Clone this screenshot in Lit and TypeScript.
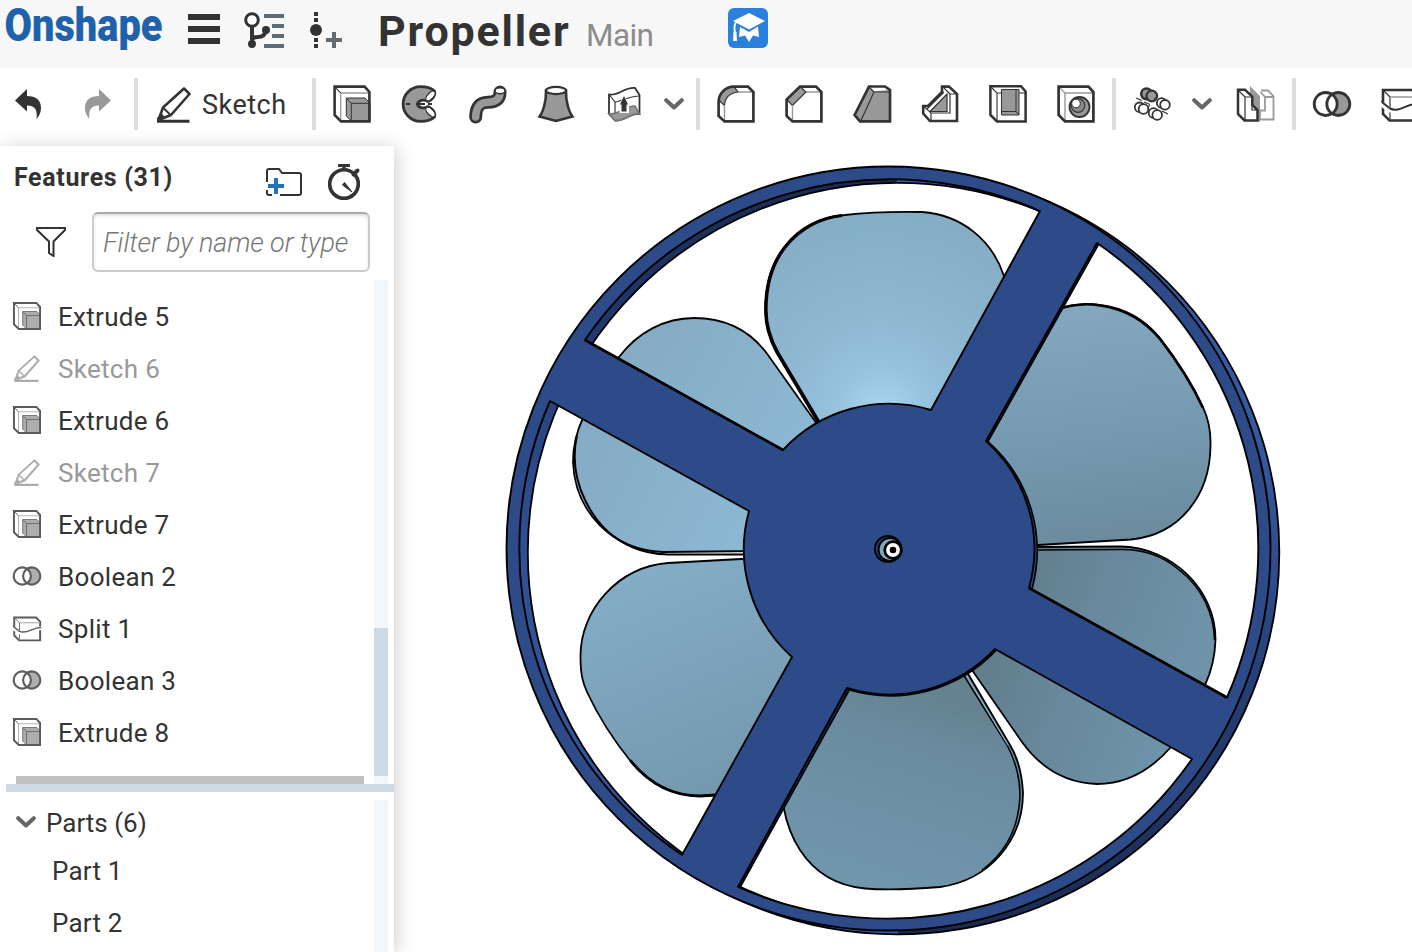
import { LitElement, html, css, svg, TemplateResult } from "lit";
import { customElement, property } from "lit/decorators.js";

const D = "#333";
const G = "#999";

const icons: Record<string, TemplateResult> = {
  pencil: svg`<g fill="none" stroke=${D} stroke-width="2.6" stroke-linejoin="round">
    <path d="M4.5 36 L9 23.5 L30 4.5 L35.5 10 L17 31 Z"/><path d="M9.5 24 L16.5 31" stroke-width="2"/>
    <path d="M4 36 L9 31" stroke-width="4"/><path d="M3 37.2 H35.5" stroke-width="3"/></g>`,
  extrude: svg`<g stroke-linejoin="miter"><path d="M2.6 2.6 H32.5 L37.4 8 V37.4 H9 L2.6 31 Z" fill="#fff"/>
    <path d="M3 3 L8.7 9 V37 M8.7 9 H37" fill="none" stroke=${G} stroke-width="1.3"/>
    <path d="M3 3 L8.7 9" stroke=${D} stroke-width="1"/>
    <path d="M14.3 14 H33 L38 19.3 V37 H19.3 L14.3 32 Z" fill=${G} stroke=${D} stroke-width="1"/>
    <path d="M14.3 14 L19.3 19.3 H38 M19.3 19.3 V37" fill="none" stroke=${D} stroke-width="1"/>
    <path d="M2.6 2.6 H32.5 L37.4 8 V37.4 H9 L2.6 31 Z" fill="none" stroke=${D} stroke-width="2.6"/></g>`,
  revolve: svg`<path d="M34.5 7 C31 3.5 26 2.6 20.500 2.6 A17.4 17.4 0 0 0 20.5 37.4 C26 37.4 31 36.5 34.5 33 C36 29 33 24.5 28 22.5 C24 25 18 24 17.5 20 C18 16 24 15 28 17.5 C33 15.5 36 11 34.5 7 Z" fill=${G} stroke=${D} stroke-width="2.8" stroke-linejoin="round"/>
    <ellipse cx="30.5" cy="12" rx="3" ry="6" transform="rotate(43 30.5 12)" fill="#fff" stroke=${D} stroke-width="1.3"/>
    <ellipse cx="30.5" cy="28" rx="3" ry="6" transform="rotate(-43 30.5 28)" fill="#fff" stroke=${D} stroke-width="1.3"/>
    <path d="M6 20 H10 M16 20 H25 M28 20 H32" stroke=${D} stroke-width="2"/>`,
  sweep: svg`<g fill="none" stroke-linecap="round"><path d="M7.7 33 C8 21 13 18.5 20 18.3 C28 18 32 15 32 8" stroke=${D} stroke-width="13"/>
    <path d="M7.7 33 C8 21 13 18.5 20 18.3 C28 18 32 15 32 8" stroke=${G} stroke-width="7.600"/></g>
    <ellipse cx="32" cy="6.8" rx="5" ry="3" fill="#fff" stroke=${D} stroke-width="1.5"/>`,
  loft: svg`<path d="M10 6.5 C10.5 17 7 28 3.5 32.5 L20 37 L36.5 32.5 C33 28 29.5 17 30 6.5 Z" fill=${G} stroke=${D} stroke-width="2.6"/>
    <ellipse cx="20" cy="6.5" rx="10" ry="3.6" fill="#fff" stroke=${D} stroke-width="2.2"/>`,
  thicken: svg`<g fill="#fff" stroke=${D} stroke-width="1.8" stroke-linejoin="round"><path d="M5 10.5 C15 12 20 3 31 4 L35.5 11 V30 C27 28 22 37 11 36.5 L5 30 Z"/>
    <path d="M5 10.5 L11 18 C19 17 26 12 35.5 12" fill="none" stroke-width="1.2"/><path d="M11 18 V36" stroke-width="1.2"/></g>
    <path d="M5 30 C14 31 21 22 31 22 L35.5 30 C27 28 22 37 11 36.5 Z" fill=${G} stroke="#777" stroke-width="1.6"/>
    <path d="M15.500 21 L20 10 L25 21 V29 H15.5 Z" fill="#fff"/><path d="M16 20.5 L20 12 L24 20.5 H22.5 V27.5 H17.5 V20.5 Z" fill=${D}/>`,
  fillet: svg`<path d="M2.6 32 V18 A15.5 15.5 0 0 1 18 2.6 H32 L37.4 8 V37.4 H8.5 Z" fill="#fff"/>
    <path d="M2.6 16 C4 8 9 3 18 2.6 L22 8 C14 9 9 13 8.5 21.5 Z" fill=${G} stroke=${D} stroke-width="1.2"/>
    <path d="M8.5 21 V37 M22 8 H37" stroke=${G} stroke-width="1.4"/>
    <path d="M2.6 32 V18 A15.5 15.5 0 0 1 18 2.6 H32 L37.4 8 V37.4 H8.5 Z" fill="none" stroke=${D} stroke-width="2.7"/>`,
  chamfer: svg`<path d="M16 2.6 H32 L37.4 8 V37.4 H8.5 L2.6 32 V15.5 Z" fill="#fff"/>
    <path d="M16 2.6 L22 8 L8.5 21.5 L2.6 15.5 Z" fill=${G} stroke=${D} stroke-width="1.2"/>
    <path d="M8.5 21 V37 M22 8 H37" stroke=${G} stroke-width="1.4"/>
    <path d="M16 2.6 H32 L37.4 8 V37.4 H8.5 L2.6 32 V15.5 Z" fill="none" stroke=${D} stroke-width="2.7"/>`,
  draft: svg`<path d="M17 2.6 H33 L38 6 V37.4 H8 L2.6 31 Z" fill=${G} stroke=${D} stroke-width="2.7"/>
    <path d="M18 3.8 H32.5 L35.5 6 L22 7.5 Z" fill="#fff"/><path d="M17.5 3.5 L22 8 L9 36.5 M22 8 H37" fill="none" stroke=${D} stroke-width="1.2"/>`,
  rib: svg`<path d="M22 2.6 H29 L37 10 V37 H10 L3.2 29.5 V22 H8 L22 8 Z" fill="#fff" stroke=${D} stroke-width="2.6"/>
    <path d="M27 10 V27.5 H10 Z" fill=${G} stroke=${D} stroke-width="1.2"/>
    <path d="M24 4 L30 10 V29 H11 L4 22.5 M11 29 V36 M30 10 H36 M24 8 L7 25" fill="none" stroke=${D} stroke-width="1.2"/>`,
  shell: svg`<path d="M2.4 2.2 H33 L37.6 7.5 V37.5 H9 L2.4 31 Z" fill="#fff"/>
    <path d="M13.5 5.5 H31 V31 H13.5 Z" fill=${G} stroke=${D} stroke-width="1"/>
    <path d="M28 6 V27.5 L31 31 M13.5 27.5 H28" fill="none" stroke=${D} stroke-width="1"/>
    <path d="M3 3 L9 9 V37 M9 9 H13.5 M31 9 H37" fill="none" stroke=${D} stroke-width="1.1"/>
    <path d="M2.4 2.2 H33 L37.6 7.5 V37.5 H9 L2.4 31 Z" fill="none" stroke=${D} stroke-width="2.5"/>`,
  hole: svg`<path d="M2.6 2.6 H32.5 L37.4 8 V37.4 H9 L2.6 31 Z" fill="#fff"/>
    <path d="M3 3 L9 9 V37 M9 9 H37" fill="none" stroke=${G} stroke-width="1.4"/>
    <circle cx="23.5" cy="23" r="10" fill=${G} stroke=${D} stroke-width="1.8"/>
    <circle cx="22" cy="21.5" r="6.8" fill="#888" stroke=${D} stroke-width="1.2"/>
    <circle cx="20" cy="19.5" r="4.3" fill="#fff" stroke=${D} stroke-width="1"/>
    <path d="M2.6 2.6 H32.5 L37.4 8 V37.4 H9 L2.6 31 Z" fill="none" stroke=${D} stroke-width="2.7"/>`,
  pattern: svg`<g stroke=${D} stroke-width="1.8"><circle cx="14.5" cy="9.8" r="5.3" fill=${G} stroke-width="2.6"/><circle cx="19.8" cy="12" r="5.3" fill=${G} stroke-width="2.2"/>
    <g fill="#fff"><circle cx="7.6" cy="23.3" r="4.8"/><circle cx="11.5" cy="25" r="4.8"/>
    <circle cx="29.7" cy="19" r="4.8"/><circle cx="33" cy="20.8" r="4.8"/>
    <circle cx="21.5" cy="29" r="4.8"/><circle cx="25.2" cy="31" r="4.8"/></g>
    <path d="M4 14 L10 16.5 M12 18 L18 20.5 M22 15 L26 13 M30 27 L36 30 M16 22.5 L18 21.500" stroke-width="1.2"/></g>`,
  mirror: svg`<path d="M14 2 L24 12 V38 L21 36 V25 L16 20 V12 L14 10 Z" fill=${G}/>
    <path d="M2 5.8 H9 L16.3 12.7 V21 L21.5 26 V36.5 H8.5 L2 30 Z" fill="#fff" stroke=${D} stroke-width="2.5"/>
    <path d="M3 7 L9 13 V36 M9 13 H16 M16 21 V26 H21" fill="none" stroke=${D} stroke-width="1.2"/>
    <path d="M25 6.5 H32 L37.5 12 V35.5 H24 V26.5 H29 V13 L24.5 8 M29 13 H37" fill="none" stroke=${G} stroke-width="1.8"/>`,
  boolean: svg`<circle cx="26.3" cy="20" r="11.5" fill=${G}/><circle cx="13.7" cy="20" r="11.5" fill="#fff"/>
    <g fill="none" stroke=${D} stroke-width="2.8"><circle cx="26.3" cy="20" r="11.5"/><circle cx="13.7" cy="20" r="11.5"/></g>`,
  split: svg`<path d="M3 6 H32 L37.5 11.5 V36.5 H9.5 L3 30 Z" fill="#fff" stroke=${D} stroke-width="2.6"/>
    <path d="M4 7 L10 13 V35" fill="none" stroke=${D} stroke-width="1.2"/><path d="M10 13 H37" stroke=${G} stroke-width="1.5"/>
    <path d="M0 19 L10 26 C20 30 27 20 40 20" fill="none" stroke="#fff" stroke-width="5"/>
    <path d="M1.5 17 L3 19 L10 24.5 C20 29 27 19 39 19.5" fill="none" stroke=${D} stroke-width="2"/>`,
};

@customElement("tool-icon")
class ToolIcon extends LitElement {
  @property() name = "";
  static styles = css`
    :host { display: block; width: 40px; height: 40px; flex: none; }
    svg { display: block; width: 100%; height: 100%; }
  `;
  render() {
    return html`<svg viewBox="0 0 40 40">${icons[this.name]}</svg>`;
  }
}

@customElement("chevron-down")
class ChevronDown extends LitElement {
  static styles = css`:host { display: block; flex: none; width: 20px; height: 12px; } svg { display: block; }`;
  render() {
    return html`<svg width="20" height="12" viewBox="0 0 20 12"><path d="M2.2 2.2 L10 9.5 L17.8 2.2" fill="none" stroke="#666" stroke-width="4" stroke-linecap="round" stroke-linejoin="round"/></svg>`;
  }
}

const FRONT_HOLES =
  "M585 340 A370 370 0 0 1 1040 211 L931 410 A144.500 144.500 0 0 0 783 450 Z" +
  "M1097 243 A370 370 0 0 1 1227 697.500 L1029 588 A144.500 144.500 0 0 0 986 441 Z" +
  "M1192 759 A370 370 0 0 1 738 887 L847 688 A144.500 144.500 0 0 0 995 649 Z" +
  "M682 855 A370 370 0 0 1 550 401 L749 511 A144.500 144.500 0 0 0 792 657 Z";
const FRONT_RIM =
  "M506.500 548.500 A382 382 0 0 1 888.500 166.500 A382 382 0 0 1 1270.500 548.500 A382 382 0 0 1 888.500 930.500 A382 382 0 0 1 506.500 548.500 Z";

@customElement("model-view")
class ModelView extends LitElement {
  static styles = css`:host { display: block; } svg { display: block; }`;
  render() {
    return html`<svg width="1018" height="812" viewBox="394 140 1018 812">
      <defs>
        <linearGradient id="wallL" gradientUnits="userSpaceOnUse" x1="0" y1="180" x2="0" y2="860">
          <stop offset="0" stop-color="#192b50"/><stop offset=".2" stop-color="#20376a"/><stop offset=".34" stop-color="#294581"/><stop offset=".55" stop-color="#2f5092"/><stop offset="1" stop-color="#345ba4"/>
        </linearGradient>
        <linearGradient id="wallR" gradientUnits="userSpaceOnUse" x1="0" y1="200" x2="0" y2="930">
          <stop offset="0" stop-color="#355da6"/><stop offset=".35" stop-color="#3359a0"/><stop offset=".52" stop-color="#2d4c8a"/><stop offset=".7" stop-color="#243c70"/><stop offset="1" stop-color="#1a2b52"/>
        </linearGradient>
        <radialGradient id="b1" gradientUnits="userSpaceOnUse" cx="882" cy="412" r="200">
          <stop offset="0" stop-color="#a8d6f1"/><stop offset=".22" stop-color="#97c3de"/><stop offset=".5" stop-color="#8eb7d1"/><stop offset="1" stop-color="#86adc6"/>
        </radialGradient>
        <linearGradient id="b2" gradientUnits="userSpaceOnUse" x1="620" y1="370" x2="790" y2="470">
          <stop offset="0" stop-color="#86abc4"/><stop offset="1" stop-color="#8cb8d3"/>
        </linearGradient>
        <linearGradient id="b3" gradientUnits="userSpaceOnUse" x1="650" y1="560" x2="740" y2="780">
          <stop offset="0" stop-color="#84adc7"/><stop offset="1" stop-color="#7499af"/>
        </linearGradient>
        <linearGradient id="b4" gradientUnits="userSpaceOnUse" x1="930" y1="690" x2="870" y2="890">
          <stop offset="0" stop-color="#64828f"/><stop offset=".25" stop-color="#6a8b9f"/><stop offset="1" stop-color="#7197ad"/>
        </linearGradient>
        <linearGradient id="b5" gradientUnits="userSpaceOnUse" x1="1010" y1="620" x2="1200" y2="690">
          <stop offset="0" stop-color="#617f8d"/><stop offset=".35" stop-color="#68889b"/><stop offset="1" stop-color="#6f94aa"/>
        </linearGradient>
        <linearGradient id="b6" gradientUnits="userSpaceOnUse" x1="1080" y1="310" x2="1110" y2="545">
          <stop offset="0" stop-color="#82a7bf"/><stop offset=".55" stop-color="#7599b0"/><stop offset="1" stop-color="#6a8b9c"/>
        </linearGradient>
      </defs>

      <g stroke="#000" stroke-width="1.8" stroke-linejoin="round">
        <path fill="url(#b2)" d="M817 424 L768 355 C750 330 725 318 694 318 C665 318 638 332 619 357 L583 418 C575 435 573 448 573 462 C575 512 612 550 663 552 L760 551 L830 450 Z"/>
        <path fill="none" d="M577 435 C567 480 592 530 632 547 Q648 554 668 554.5 L746 554.5" stroke-width="2"/>
        <path fill="url(#b1)" d="M818 423 L776 352 C768 337 765 325 765 310 C765 285 772 262 785 246 C800 227 820 217 845 215 C870 212 890 211.5 922 212 C962 215 992 240 1004 276 L1000 340 L930 430 L840 440 Z"/>
        <path fill="none" stroke-width="3.2" d="M819 422 L778 353 C769 337 766 325 766 310 C766 285 773 262 786 246 C801 228 820 218 842 215.500"/>
        <path fill="url(#b3)" d="M750 558.500 L668 563 C618 567 580 610 580.5 657 C580.5 675 583 683 587 692 C599 718 615 742 632 763 C650 785 675 796 700 796 L716 795 L810 700 L800 600 Z"/>
        <path fill="none" stroke-width="2.8" d="M630 760 C650 785 675 796 700 796 L716 795"/>
        <path fill="url(#b6)" d="M1062 308 C1075 304 1090 303.5 1100 305 C1125 308 1145 320 1160 338 C1177 360 1192 383 1203 407 C1209 420 1211 432 1210.5 446 C1210 495 1180 535 1131 539.5 L1030 545.5 L960 450 Z"/>
        <path fill="none" stroke-width="2.6" d="M1063 307.5 C1075 304 1090 303.5 1100 305.5 C1125 309 1145 321 1160 339 C1177 361 1192 384 1203 408"/>
        <path fill="url(#b5)" d="M1030 547 L1120 546.5 C1172 547 1216 590 1215.5 640 C1215 655 1212 670 1205 685 L1171 747 C1150 771 1125 784 1097 784 C1065 783 1040 767 1022 742 L972 670 L990 560 Z"/>
        <path fill="none" d="M1030 550 L1120 549.5 C1145 549 1165 558 1178 569 C1203 588 1214 615 1214.500 640" stroke-width="1.5"/>
        <path fill="url(#b4)" d="M783.5 807 C787 825 792 838 800 850 C815 873 838 886 865 888.500 C890 890.5 915 889 940 887 C990 880 1023 840 1023 793 C1022 773 1018 758 1010 745 L967 672 L840 680 Z"/>
        <path fill="none" stroke-width="1.5" d="M963 674 L1007 745 C1017 764 1020 780 1020 795 C1019 830 1005 853 982 870"/>
        <path fill="none" stroke-width="1.2" stroke="#8bb6cf" d="M966 675 L1008 745"/>
      </g>

      <path d="M897.3 928 A375.7 375.7 0 0 1 897.3 176.6" fill="none" stroke="url(#wallL)" stroke-width="12.5"/>
      <path d="M897.3 176.6 A375.7 375.7 0 0 1 897.3 928" fill="none" stroke="url(#wallR)" stroke-width="12.5"/>
      <g fill="none" stroke="#000" stroke-width="1.8"><circle cx="897.3" cy="552.3" r="382"/><circle cx="897.3" cy="552.3" r="369.5"/></g>
      <g fill="#1d3261" stroke="#000" stroke-width="1.6" stroke-linejoin="round">
        <path d="M1097 243 L1098.5 244.5 L988 441.500 L986 441 Z"/>
        <path d="M847 688 L849.5 689.5 L740 887.5 L738 887 Z"/>
        <path fill="#2a477f" d="M986 441 L988 441.5 A145.5 145.5 0 0 1 1032 589 L1029 588 Z"/>
        <path d="M995 649 L996 650.5 A145.5 145.5 0 0 1 848 689.5 L860 670 Z"/>
      </g>
      <path d="${FRONT_RIM}${FRONT_HOLES}" fill="#2d4b88" fill-rule="evenodd" stroke="#000" stroke-width="1.900" stroke-linejoin="round"/>
      <path d="M585 340 L783 450 M1029 588 L1227 697.5" stroke="#000" stroke-width="2.6"/>

      <g stroke="#000">
        <circle cx="888" cy="549" r="13" fill="#2a477f" stroke-width="2"/>
        <circle cx="890" cy="549.5" r="11.5" fill="#7fa9bd" stroke-width="2"/>
        <circle cx="893" cy="550" r="8.3" fill="#fff" stroke-width="2.8"/>
        <circle cx="893" cy="550" r="3.3" stroke="none"/>
      </g>
    </svg>`;
  }
}

const FEATURES = [
  { icon: "extrude", label: "Extrude 5" },
  { icon: "pencil", label: "Sketch 6", muted: true },
  { icon: "extrude", label: "Extrude 6" },
  { icon: "pencil", label: "Sketch 7", muted: true },
  { icon: "extrude", label: "Extrude 7" },
  { icon: "boolean", label: "Boolean 2" },
  { icon: "split", label: "Split 1" },
  { icon: "boolean", label: "Boolean 3" },
  { icon: "extrude", label: "Extrude 8" },
];

@customElement("feature-panel")
class FeaturePanel extends LitElement {
  static styles = css`
    :host { display: flex; flex-direction: column; width: 394px; height: 806px; background: #fff; flex: none;
      box-shadow: 2px 2px 18px rgba(0, 0, 0, 0.2); color: #333; font-size: 26px; letter-spacing: 0.3px; }
    .head { display: flex; height: 62px; padding-left: 14px; flex: none; }
    .title { font-weight: 700; font-size: 25px; line-height: 64px; letter-spacing: 0.65px; width: 252px; }
    .folder { margin-top: 22px; }
    .timer { margin: 18px 0 0 26px; }
    .filter { display: flex; height: 60px; margin-top: 4px; padding-left: 36px; flex: none; align-items: center; }
    .input { box-sizing: border-box; width: 278px; height: 60px; margin-left: 26px; border: 2px solid #ccc; border-top-color: #aaa; border-radius: 6px;
      box-shadow: inset 0 2px 3px rgba(0, 0, 0, 0.12); padding-left: 9px; line-height: 58px; color: #777;
      font-style: italic; font-weight: 300; font-size: 27px; letter-spacing: -0.12px; white-space: nowrap; }
    .features { display: flex; height: 504px; margin-top: 8px; flex: none; }
    .list { width: 374px; padding-top: 11px; box-sizing: border-box; display: flex; flex-direction: column; }
    .row { display: flex; align-items: center; height: 52px; padding-left: 12px; gap: 16px; flex: none; line-height: 52px; }
    .row tool-icon { width: 30px; height: 30px; opacity: 0.8; margin-top: -3px; }
    .row.muted { color: #999; }
    .row.muted tool-icon { opacity: 0.4; }
    .rollback { height: 8px; margin: auto 10px 0 16px; background: #c1c1c1; }
    .track { width: 14px; background: #f2f7fb; display: flex; flex-direction: column; }
    .thumb { height: 148px; margin: auto 0 8px; background: #cddae4; }
    .splitter { height: 8px; margin-left: 6px; background: #cddae4; flex: none; }
    .parts { display: flex; flex: 1; min-height: 0; }
    .parts .track { margin-top: 8px; }
    .partlist { width: 374px; line-height: 52px; padding-top: 5px; box-sizing: border-box; letter-spacing: 0.2px; }
    .group { display: flex; align-items: center; height: 48px; padding-left: 16px; gap: 10px; letter-spacing: 0; }
    .group chevron-down { margin-top: 2px; }
    .group span { padding-top: 4px; }
    .part { height: 52px; padding-left: 52px; }
  `;
  render() {
    return html`
      <div class="head">
        <span class="title">Features (31)</span>
        <svg class="folder" width="36" height="28" viewBox="0 0 36 28"><path d="M1 14 V3 Q1 1 3 1 H13 L16 5 H33 Q35 5 35 7 V25 Q35 27 33 27 H14 M1 22 V25 Q1 27 3 27 H6" fill="none" stroke="#333" stroke-width="2"/><path d="M8 10 H12 V16 H18 V20 H12 V26 H8 V20 H2 V16 H8 Z" fill="#2272b9"/></svg>
        <svg class="timer" width="34" height="38" viewBox="0 0 34 38"><circle cx="16" cy="20" r="14.3" fill="none" stroke="#333" stroke-width="3.6"/><path d="M10 1.5 H22 M16 1 V6" stroke="#333" stroke-width="3.2"/><path d="M25.5 10.5 L29.5 6.5" stroke="#333" stroke-width="4" stroke-linecap="round"/><path d="M14.5 21 L16.5 18.5 L24 28 Z" fill="#333" stroke="#333" stroke-linejoin="round"/></svg>
      </div>
      <div class="filter">
        <svg width="30" height="30" viewBox="0 0 30 30"><path d="M1 1 H29 V3 L17.500 14.5 V29 L13 26 V14.5 L1 3 Z" fill="none" stroke="#333" stroke-width="2"/></svg>
        <div class="input">Filter by name or type</div>
      </div>
      <div class="features">
        <div class="list">
          ${FEATURES.map((f) => html`<div class="row ${f.muted ? "muted" : ""}"><tool-icon name=${f.icon}></tool-icon><span>${f.label}</span></div>`)}
          <div class="rollback"></div>
        </div>
        <div class="track"><div class="thumb"></div></div>
      </div>
      <div class="splitter"></div>
      <div class="parts">
        <div class="partlist">
          <div class="group"><chevron-down></chevron-down><span>Parts (6)</span></div>
          <div class="part">Part 1</div>
          <div class="part">Part 2</div>
        </div>
        <div class="track"></div>
      </div>`;
  }
}

@customElement("app-root")
class AppRoot extends LitElement {
  static styles = css`
    :host { display: block; width: 1412px; height: 952px; overflow: hidden; background: #fff; color: #333; font-family: Roboto, "Noto Sans", sans-serif; }
    header { display: flex; height: 68px; background: #f7f7f7; }
    header svg { display: block; flex: none; }
    .menu { margin: 14px 0 0 8px; }
    .tree { margin: 12px 0 0 24px; }
    .insert { margin: 12px 0 0 26px; }
    .name { width: 208px; margin-left: 36px; font-weight: 700; font-size: 43px; line-height: 63px; letter-spacing: 1.8px; }
    .tab { width: 142px; font-size: 31.5px; line-height: 71px; font-weight: 400; letter-spacing: -0.6px; color: #8c8c8c; }
    .learn { margin-top: 8px; }
    .toolbar { display: flex; align-items: center; height: 72px; overflow: hidden; }
    .undo { margin-left: 14px; flex: none; }
    .redo { margin: 0 20px 0 42px; flex: none; }
    .sep { width: 4px; height: 52px; background: #ddd; margin: 0 2px; flex: none; }
    .tool { width: 68px; display: flex; justify-content: center; flex: none; }
    .more { width: 32px; margin-right: 4px; display: flex; justify-content: center; flex: none; }
    .sketch { display: flex; align-items: center; width: 156px; padding-left: 14px; gap: 8px; font-size: 27px; letter-spacing: 0.5px; flex: none; }
    .sketch span { padding-top: 2px; }
    .body { display: flex; }
    feature-panel { margin-top: 6px; z-index: 1; }
  `;
  private tool(n: string) {
    return html`<div class="tool"><tool-icon name=${n}></tool-icon></div>`;
  }
  render() {
    const sep = html`<div class="sep"></div>`;
    const more = html`<div class="more"><chevron-down></chevron-down></div>`;
    return html`
      <header>
        <svg width="180" height="68"><text x="4.5" y="41" font-size="46" font-weight="900" fill="#1f62ab" textLength="158" lengthAdjust="spacingAndGlyphs">Onshape</text></svg>
        <svg class="menu" width="32" height="30"><path d="M0 3 H32 M0 15 H32 M0 27 H32" stroke="#333" stroke-width="6"/></svg>
        <svg class="tree" width="40" height="36" viewBox="0 0 40 36"><path d="M20 4 H40 M28 14 H40 M28 24 H40 M20 34 H40" stroke="#5f6c75" stroke-width="4"/><path d="M8 14 V32 M8 28 Q9 25 14 25 Q21 25 22 18" fill="none" stroke="#333" stroke-width="4"/><circle cx="8" cy="8" r="6.3" fill="#fff" stroke="#333" stroke-width="3"/><circle cx="8" cy="32" r="4" fill="#333"/><circle cx="22" cy="18" r="4" fill="#333"/></svg>
        <svg class="insert" width="32" height="36" viewBox="0 0 32 36"><path d="M6 0 V36" stroke="#333" stroke-width="4" stroke-dasharray="4 2 4 16 4 2 4"/><circle cx="6" cy="18" r="6" fill="#333"/><path d="M16 28 H32 M24 20 V36" stroke="#5f6c75" stroke-width="4"/></svg>
        <div class="name">Propeller</div>
        <div class="tab">Main</div>
        <svg class="learn" width="40" height="40" viewBox="0 0 40 40"><rect width="40" height="40" rx="6" fill="#2b80dc"/><path d="M5 13 L21 5 L37 13 L21 21.5 Z" fill="#fff"/><path d="M12 19 L21 24 L30 18.5 L31 29 L25 27.5 L21 34 L17 27.5 L11 29 Z" fill="#fff"/><path d="M9 14 Q6.5 15 6.5 20 V24 M7 22 V33" fill="none" stroke="#fff" stroke-width="1.8"/><path d="M5.5 24 H8.5 L9 33 H5 Z" fill="#fff"/></svg>
      </header>
      <div class="toolbar">
        <svg class="undo" width="28" height="32" viewBox="0 0 28 32"><path d="M1 12.5 L13 1 V8 C22 8 27 12 27 20 C27 25 25 28 22.5 31 C23.5 23 22 17.5 13 17.5 V23.5 Z" fill="#333"/></svg>
        <svg class="redo" width="28" height="32" viewBox="0 0 28 32"><path d="M27 12.5 L15 1 V8 C6 8 1 12 1 20 C1 25 3 28 5.5 31 C4.5 23 6 17.5 15 17.5 V23.5 Z" fill="#999"/></svg>
        ${sep}
        <div class="sketch"><tool-icon name="pencil"></tool-icon><span>Sketch</span></div>
        ${sep}${["extrude", "revolve", "sweep", "loft", "thicken"].map((n) => this.tool(n))}${more}
        ${sep}${["fillet", "chamfer", "draft", "rib", "shell", "hole"].map((n) => this.tool(n))}
        ${sep}${this.tool("pattern")}${more}${this.tool("mirror")}
        ${sep}${this.tool("boolean")}${this.tool("split")}
      </div>
      <div class="body">
        <feature-panel></feature-panel>
        <model-view></model-view>
      </div>`;
  }
}
